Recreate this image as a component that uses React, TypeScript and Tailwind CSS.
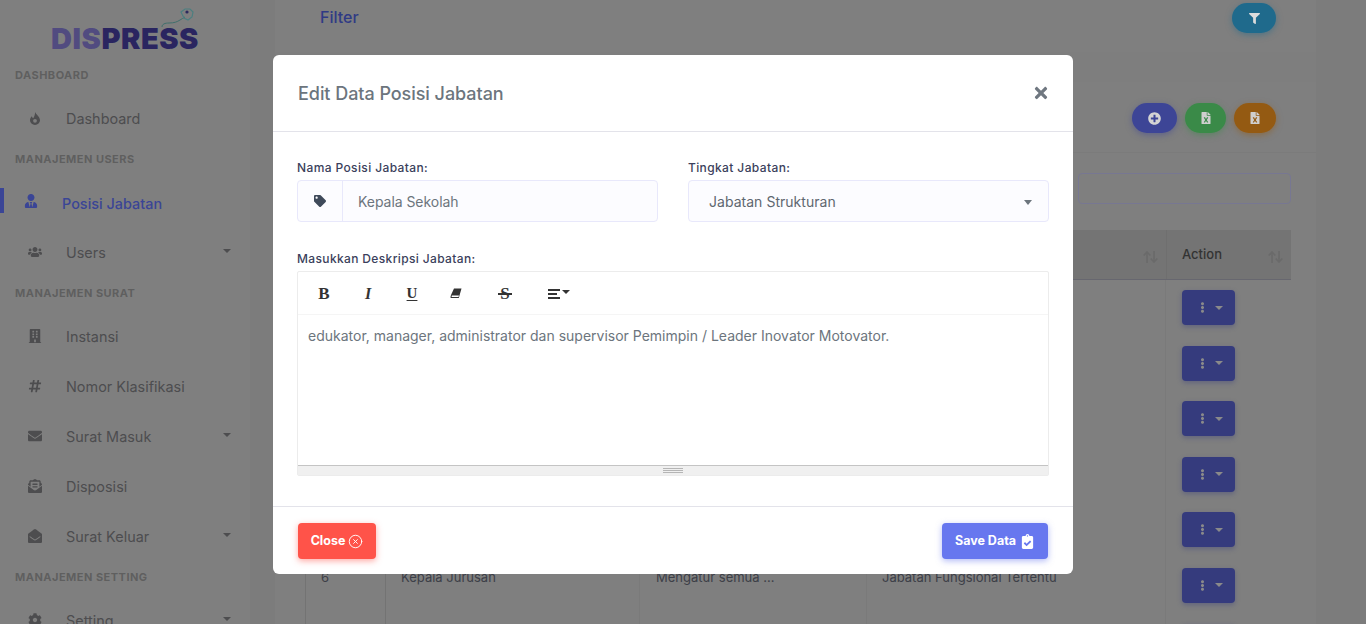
import React from "react";
import { FaUserTie, FaUsers, FaBuilding, FaHashtag, FaEnvelope, FaEnvelopeOpenText, FaEnvelopeOpen, FaCog, FaFilter, FaTag, FaTimes, FaPlusCircle, FaFileExcel, FaEllipsisV, FaClipboardCheck } from "react-icons/fa";
import { FiXCircle } from "react-icons/fi";

const font = { fontFamily: "Inter, 'Liberation Sans', sans-serif" };
const serif = { fontFamily: "'Liberation Serif', serif" };

function Caret({ className = "" }: { className?: string }) {
  return <span className={"w-0 h-0 border-x-[4px] border-x-transparent border-t-[4px] " + className} />;
}

function Section({ children, top }: { children: React.ReactNode; top: string }) {
  return <div className={"pl-[15px] text-[11px] leading-[14px] font-bold tracking-[0.48px] text-[#5f5f5f] " + top}>{children}</div>;
}

function Flame() {
  return (
    <svg width="10" height="13" viewBox="0 0 10 13" fill="currentColor">
      <path d="M5.2 0C6 2.8 10 4.6 10 8.2A5 4.8 0 0 1 0 8.2C0 6.6.8 5.4 1.9 4.3 2.2 5.4 2.6 6 3.2 6.2 4.4 4.6 5 2.4 5.2 0Z" />
      <circle cx="5" cy="8.8" r="1.9" fill="#7f7f7f" />
    </svg>
  );
}

function Item({ icon, label, caret, active }: { icon: React.ReactNode; label: string; caret?: boolean; active?: boolean }) {
  return (
    <div className={"relative flex items-center h-[50px] " + (active ? "text-[#3a4596]" : "text-[#4d4d4f]")}>
      {active && <span className="absolute left-0 top-[10px] w-[4px] h-[25px] bg-[#3a4596]" />}
      <span className={"flex justify-center w-[16px] text-[14px] " + (active ? "ml-[23px] mr-[23px] -mt-[4px]" : "ml-[27px] mr-[23px] -mt-[2px]")}>{icon}</span>
      <span className={"text-[14.4px] tracking-[0.02px] " + (active ? "font-medium mt-[1px]" : "")}>{label}</span>
      {caret && <Caret className="absolute right-[19px] top-[21px] border-t-[#4d4d4f] border-x-[4.5px]" />}
    </div>
  );
}

function Sidebar() {
  return (
    <aside className="w-[250px] shrink-0 h-full bg-[#7f7f7f] overflow-hidden">
      <div className="relative h-[68px]">
        <svg className="absolute left-[160px] top-[7px]" width="36" height="22" viewBox="0 0 36 22" fill="none">
          <path d="M2 20c0-3 3-4 7-4 5 0 8-1 11-3 2-1 3-2 5-3" stroke="#3f6f6c" strokeWidth="1" />
          <path d="M21 5l4-3 5 0 3 3-1 5-4 3-4-2z" stroke="#4c7f80" strokeWidth="1.2" />
          <circle cx="27" cy="5" r="1.6" fill="#2c2a5e" />
        </svg>
        <div className="absolute left-[51px] top-[22px] text-[29px] leading-[34px] font-black tracking-[0.55px]" style={font}>
          <span className="text-[#514b80]">DIS</span><span className="text-[#2a2560]">PRESS</span>
        </div>
      </div>
      <Section top="mt-0">DASHBOARD</Section>
      <div className="mt-[12px]"><Item icon={<Flame />} label="Dashboard" /></div>
      <Section top="mt-[8px]">MANAJEMEN USERS</Section>
      <div className="mt-[12px]">
        <Item active icon={<FaUserTie />} label="Posisi Jabatan" />
        <Item icon={<FaUsers />} label="Users" caret />
      </div>
      <Section top="mt-[8px]">MANAJEMEN SURAT</Section>
      <div className="mt-[12px]">
        <Item icon={<FaBuilding />} label="Instansi" />
        <Item icon={<FaHashtag />} label="Nomor Klasifikasi" />
        <Item icon={<FaEnvelope />} label="Surat Masuk" caret />
        <Item icon={<FaEnvelopeOpenText />} label="Disposisi" />
        <Item icon={<FaEnvelopeOpen />} label="Surat Keluar" caret />
      </div>
      <Section top="mt-[8px]">MANAJEMEN SETTING</Section>
      <div className="mt-[12px]"><Item icon={<FaCog />} label="Setting" caret /></div>
    </aside>
  );
}

function Pill({ className, children }: { className: string; children: React.ReactNode }) {
  return <span className={"flex items-center justify-center h-[30px] rounded-full " + className}>{children}</span>;
}

function XlsIcon() {
  return <FaFileExcel className="text-[12px] text-[#cfcfcf]" />;
}

function SortArrows() {
  return (
    <svg width="15" height="12" viewBox="0 0 15 12" fill="none" stroke="#6a6a6a" strokeWidth="1.6">
      <path d="M4 12V1M.7 4.5L4 1l3.3 3.5" />
      <path d="M11 0v11M7.7 7.5L11 11l3.3-3.5" />
    </svg>
  );
}

const rows = [
  ["", "", "", ""],
  ["", "", "", ""],
  ["", "", "", ""],
  ["", "", "", ""],
  ["", "", "", ""],
  ["6", "Kepala Jurusan", "Mengatur semua ...", "Jabatan Fungsional Tertentu"],
  ["", "", "", ""],
];

function Main() {
  return (
    <main className="flex-1 h-full bg-[#7c7c7c] overflow-hidden pr-[50px] pl-[25px]">
      <div className="h-[52px] bg-[#7f7f7f] flex items-start justify-between pl-[45px] pr-[40px]">
        <span className="text-[16px] leading-[24px] mt-[5px] text-[#2f3a85] font-medium">Filter</span>
        <Pill className="w-[44px] mt-[3px] bg-[#1f6a8c] shadow-[0_2px_6px_rgba(31,106,140,0.5)]"><FaFilter className="text-[11px] text-[#dcdcdc]" /></Pill>
      </div>
      <div className="h-[30px] bg-[#7e7e7e]" />
      <div className="bg-[#7f7f7f]">
        <div className="h-[71px] border-b border-[#7b7b7b] flex items-start justify-end gap-[8px] pr-[40px] pt-[21px]">
          <Pill className="w-[45px] bg-[#3d4596] shadow-[0_2px_6px_rgba(61,69,150,0.5)]"><FaPlusCircle className="text-[13px] text-[#d4d4d4]" /></Pill>
          <Pill className="w-[41px] bg-[#3a8a48] shadow-[0_2px_6px_rgba(58,138,72,0.5)]"><XlsIcon /></Pill>
          <Pill className="w-[42px] bg-[#945a12] shadow-[0_2px_6px_rgba(148,90,18,0.5)]"><XlsIcon /></Pill>
        </div>
        <div className="pl-[30px] pr-[25px]">
          <div className="mt-[20px] h-[31px] ml-auto w-[213px] border border-[#777792] rounded-[4px]" />
          <div className="mt-[26px] grid grid-cols-[81px_254px_227px_299px_125px]">
            <div className="col-span-5 grid grid-cols-subgrid h-[50px] bg-[#747474] border-b border-[#67676f]">
              <div className="col-start-4 flex justify-end pr-[8px] pt-[21px]"><SortArrows /></div>
              <div className="col-start-5 flex justify-between border-l border-[#6f6f6f] pl-[15px] pr-[8px] pt-[15px] text-[13px] leading-[18px] font-medium text-[#333]">
                <span>Action</span>
                <span className="pt-[6px]"><SortArrows /></span>
              </div>
            </div>
            {rows.map((r, i) => (
              <div key={i} className="col-span-5 grid grid-cols-subgrid h-[55.6px]">
                <div className="border-x border-[#737373] pl-[15px] pt-[10px] text-[13px] text-[#3d4048]">{r[0]}</div>
                <div className="border-r border-[#7a7a7a] pl-[15px] pt-[10px] text-[13px] text-[#3d4048]">{r[1]}</div>
                <div className="border-r border-[#7a7a7a] pl-[16px] pt-[10px] text-[13px] text-[#3d4048]">{r[2]}</div>
                <div className="border-r border-[#7a7a7a] pl-[15px] pt-[10px] text-[13px] text-[#3d4048] whitespace-nowrap">{r[3]}</div>
                <div className="pl-[16px] pt-[10px]">
                  <div className="flex items-center justify-start pl-[14.5px] gap-[7px] w-[53px] h-[35px] rounded-[4px] bg-[#353b7d] shadow-[0_2px_5px_rgba(53,59,125,0.4)]">
                    <FaEllipsisV className="text-[11px] text-[#8a8a8a]" />
                    <Caret className="border-t-[#8a8a8a] border-x-[3.5px]" />
                  </div>
                </div>
              </div>
            ))}
          </div>
        </div>
      </div>
    </main>
  );
}

function Tool({ w, children }: { w: string; children: React.ReactNode }) {
  return <span className={"flex items-center justify-center text-[#333] " + w}>{children}</span>;
}

function Modal() {
  return (
    <div className="absolute left-[273px] top-[55px] w-[800px] h-[519px] bg-white rounded-[6px] flex flex-col">
      <div className="h-[77px] shrink-0 border-b border-[#e3e3ea] flex items-center justify-between pl-[25px] pr-[23px]">
        <h5 className="text-[18px] font-medium tracking-[-0.05px] text-[#6c757d]">Edit Data Posisi Jabatan</h5>
        <FaTimes className="text-[18px] text-[#6f7780]" />
      </div>
      <div className="flex-1 px-[24px] pt-[28px]">
        <div className="grid grid-cols-2 gap-[30px]">
          <div>
            <div className="text-[12px] leading-[16px] font-medium tracking-[0.38px] text-[#3b3f5c]">Nama Posisi Jabatan:</div>
            <div className="mt-[4px] flex h-[42px] border border-[#e8e8fb] rounded-[4px] bg-[#fcfcff]">
              <span className="w-[45px] border-r border-[#e8e8fb] flex items-center justify-center text-[#3f4a5a]"><FaTag className="text-[12px]" /></span>
              <span className="pl-[15px] flex items-center text-[14px] tracking-[-0.05px] text-[#6c757d]">Kepala Sekolah</span>
            </div>
          </div>
          <div>
            <div className="text-[12px] leading-[16px] font-medium tracking-[0.38px] text-[#3b3f5c]">Tingkat Jabatan:</div>
            <div className="relative mt-[4px] flex items-center h-[42px] border border-[#e8e8fb] rounded-[4px] bg-[#fcfcff] pl-[20px] text-[14px] tracking-[0.03px] text-[#5f6770]">
              Jabatan Strukturan
              <Caret className="absolute right-[16px] top-[19px] border-t-[#6c757d] border-x-[4.5px] border-t-[5px]" />
            </div>
          </div>
        </div>
        <div className="mt-[29px] text-[12px] leading-[16px] font-medium tracking-[0.36px] text-[#3b3f5c]">Masukkan Deskripsi Jabatan:</div>
        <div className="mt-[4px] border border-[#ececec] rounded-[2px] flex flex-col h-[205px]">
          <div className="h-[43px] shrink-0 border-b border-[#f5f5f5] flex items-center pl-[12px] pt-[1px]">
            <Tool w="w-[28px]"><span className="text-[17px] font-bold leading-none" style={serif}>B</span></Tool>
            <Tool w="w-[28px] ml-[16px]"><span className="text-[16px] font-bold italic leading-none" style={serif}>I</span></Tool>
            <Tool w="w-[28px] ml-[16px]"><span className="text-[15px] font-bold underline underline-offset-2 leading-none" style={serif}>U</span></Tool>
            <Tool w="w-[28px] ml-[16px]">
              <svg width="12" height="11" viewBox="0 0 12 11" fill="#333"><path d="M4 0.5h7.5L9.5 7.5 8.8 10H1.5c-.8 0-1.2-.6-1-1.3L1 7z" /><path d="M1.8 7.4h7.2l-.5 1.6H1.6z" fill="#fff" /></svg>
            </Tool>
            <Tool w="w-[28px] ml-[21px]">
              <span className="relative text-[17px] font-bold leading-none" style={serif}>
                S
                <span className="absolute left-[-2px] right-[-2px] top-[8px] h-[1.5px] bg-[#333]" />
              </span>
            </Tool>
            <Tool w="w-[28px] ml-[26px] gap-[2px]">
              <svg width="12" height="10" viewBox="0 0 12 10" fill="#333"><rect width="12" height="2" /><rect y="4" width="9" height="2" /><rect y="8" width="12" height="2" /></svg>
              <Caret className="border-t-[#333] border-x-[3px] border-t-[3px] -mt-[3px]" />
            </Tool>
          </div>
          <div className="flex-1 px-[10px] pt-[12px] text-[14px] leading-[18px] text-[#6c757d]">
            edukator, manager, administrator dan supervisor Pemimpin / Leader Inovator Motovator.
          </div>
          <div className="h-[10px] shrink-0 bg-[#f0f0f0] border-t border-[#c4c4c4] flex flex-col items-center justify-center gap-[1px]">
            <span className="w-[20px] h-px bg-[#b5b5b5]" />
            <span className="w-[20px] h-px bg-[#b5b5b5]" />
            <span className="w-[20px] h-px bg-[#b5b5b5]" />
          </div>
        </div>
      </div>
      <div className="h-[68px] shrink-0 border-t border-[#e3e3ea] flex items-start justify-between pl-[25px] pr-[25px] pt-[16px]">
        <button className="flex items-center justify-center gap-[3px] w-[78px] h-[36px] rounded-[4px] bg-[#ff5349] shadow-[0_2px_6px_rgba(255,83,73,0.5)] text-[12.5px] font-bold text-white">
          Close <FiXCircle className="text-[15px]" strokeWidth={1.5} />
        </button>
        <button className="flex items-center justify-center gap-[4px] w-[106px] h-[36px] rounded-[4px] bg-[#6777ef] shadow-[0_2px_6px_rgba(103,119,239,0.5)] text-[12.5px] font-bold text-white">
          Save Data <FaClipboardCheck className="text-[15px]" />
        </button>
      </div>
    </div>
  );
}

export default function App() {
  return (
    <div className="relative flex w-[1366px] h-[624px] overflow-hidden" style={font}>
      <Sidebar />
      <Main />
      <Modal />
    </div>
  );
}
